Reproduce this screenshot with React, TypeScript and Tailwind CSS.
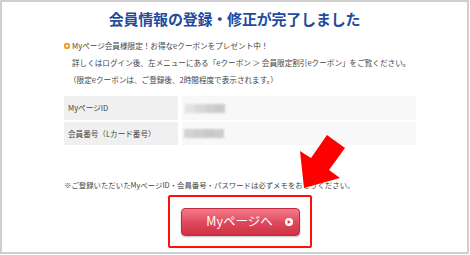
import React from 'react';

const Blur = ({ tones }: { tones: string[] }) => (
  <div className="flex h-[9px] blur-[1px]">
    {tones.map((t, i) => (
      <div key={i} className={`h-full w-[10px] ${t}`} />
    ))}
  </div>
);

export default function App() {
  return (
    <div className="relative w-[470px] h-[255px] bg-white font-['Noto_Sans_CJK_JP','Liberation_Sans',sans-serif] text-[#444]">
      <div className="w-[469px] h-[254px] border-2 border-[#cfcfcf] pt-[8px]">
        {/* title */}
        <h1 className="text-center text-[15px] leading-[18px] font-bold text-[#1f4c9e] tracking-[-0.2px]">
          会員情報の登録・修正が完了しました
        </h1>

        {/* coupon notice */}
        <div className="mt-[9px] pl-[62px] text-[7.6px] leading-[17px]">
          <div className="flex items-center">
            <span className="mr-[2px] h-[6px] w-[6px] rounded-[2px] border-[2px] border-[#f0a020]" />
            <span>Myページ会員様限定！お得なeクーポンをプレゼント中！</span>
          </div>
          <div className="pl-[8px]">詳しくはログイン後、左メニューにある「eクーポン ＞ 会員限定割引eクーポン」をご覧ください。</div>
          <div className="pl-[5px]">（限定eクーポンは、ご登録後、2時間程度で表示されます。）</div>
        </div>

        {/* account table */}
        <div className="mt-[8px] ml-[62px] grid grid-cols-[114px_234px] gap-x-[4px] gap-y-[2px] text-[7.6px]">
          <div className="h-[24px] bg-[#f0f0f0] flex items-center pl-[4px]">MyページID</div>
          <div className="h-[24px] bg-[#f8f8f8] flex items-center pl-[3px]">
            <Blur tones={['bg-[#e2e2e2]', 'bg-[#d8d8d8]', 'bg-[#d0d0d0]', 'bg-[#cacaca]']} />
          </div>
          <div className="h-[23px] bg-[#f0f0f0] flex items-center pl-[4px]">会員番号（Lカード番号）</div>
          <div className="h-[23px] bg-[#f8f8f8] flex items-center pl-[2px]">
            <Blur tones={['bg-[#d2d2d2]', 'bg-[#cdcdcd]', 'bg-[#c8c8c8]', 'bg-[#cccccc]']} />
          </div>
        </div>

        <p className="mt-[34px] pl-[62px] text-[7.4px] leading-[12px]">
          ※ご登録いただいたMyページID・会員番号・パスワードは必ずメモをおとりください。
        </p>

        {/* button with red highlight */}
        <div className="mt-[4px] ml-[166px] w-[144px] h-[53px] border-2 border-[#ff1010] rounded-[2px] flex items-center justify-center">
          <button className="relative ml-[1px] w-[119px] h-[28px] rounded-[4px] border border-[#c4283e] bg-gradient-to-b from-[#f27c8b] via-[#e04a5e] to-[#cf2f46] shadow-[0_1px_2px_rgba(0,0,0,0.25)] text-white text-[12.5px] leading-none flex items-center justify-center">
            <span className="mr-[2px]">Myページへ</span>
            <span className="absolute right-[6px] top-1/2 -translate-y-1/2 w-[8px] h-[8px] rounded-full bg-white flex items-center justify-center">
              <svg width="4" height="4" viewBox="0 0 4 4">
                <polygon points="0.6,0 4,2 0.6,4" fill="#d53a50" />
              </svg>
            </span>
          </button>
        </div>
      </div>

      {/* pointing arrow */}
      <svg className="absolute left-0 top-0 pointer-events-none" width="470" height="255" viewBox="0 0 470 255">
        <polygon points="327,135 345,148 329,170 340,178 304,188 300,151 311,158" fill="#ff0000" />
      </svg>
    </div>
  );
}
